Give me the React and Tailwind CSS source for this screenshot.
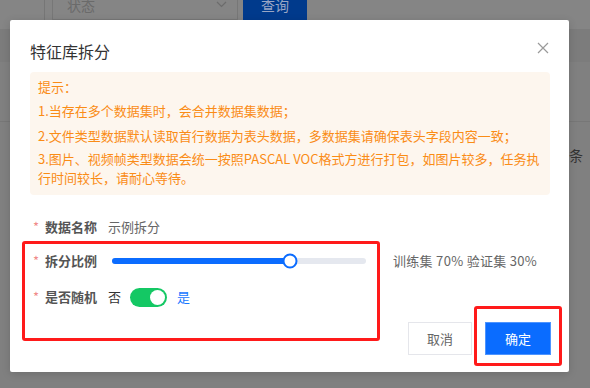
import React from 'react';

const font = { fontFamily: '"Noto Sans CJK SC", "Noto Sans", sans-serif' };

function CloseIcon() {
  return (
    <svg width="12" height="12" viewBox="0 0 12 12" fill="none">
      <path d="M1 1L11 11M11 1L1 11" stroke="#9a9a9a" strokeWidth="1.2" />
    </svg>
  );
}

function Chevron() {
  return (
    <svg width="11" height="7" viewBox="0 0 11 7" fill="none">
      <path d="M1 1L5.5 5.5L10 1" stroke="#6c6c6c" strokeWidth="1.2" />
    </svg>
  );
}

function FormLabel({ children }) {
  return (
    <div className="flex items-center pl-[23px] w-[87px] shrink-0">
      <span className="w-[12px] text-[13px] leading-[20px] text-[#f08a8a]">*</span>
      <span className="text-[13px] leading-[20px] font-semibold text-[#555]">{children}</span>
    </div>
  );
}

export default function App() {
  const ratio = 70;

  return (
    <div className="relative w-[590px] h-[388px] overflow-hidden bg-[#808080]" style={font}>
      {/* dimmed page behind the dialog */}
      <div className="flex h-[29px] bg-[#858585] overflow-hidden">
        <div className="w-[45px] h-[20px] border-r border-[#767676]" />
        <div className="ml-[7px] -mt-[11px] w-[186px] h-[31px] border border-[#777] flex items-center justify-between pl-[14px] pr-[10px]">
          <span className="text-[14px] leading-[20px] text-[#6a6a6a]">状态</span>
          <Chevron />
        </div>
        <div className="ml-[5px] -mt-[11px] w-[64px] h-[31px] bg-[#003a8c] flex items-center justify-center">
          <span className="text-[14px] leading-[20px] text-[#9aa6c4]">查询</span>
        </div>
      </div>
      <div className="h-[33px] bg-[#7c7c7c]" />
      <div className="h-[60px] border-b border-[#777]" />
      <div className="flex justify-end pr-[7px] pt-[23px]">
        <span className="text-[14px] text-[#333]">条</span>
      </div>

      {/* dialog */}
      <div className="absolute left-[10px] top-[20px] w-[559px] h-[352px] bg-white rounded-[2px] shadow-[0_2px_8px_rgba(0,0,0,0.15)]">
        <div className="flex items-center justify-between pl-[20px] pr-[20px] pt-[19px]">
          <h1 className="text-[16px] leading-[24px] text-[#333] font-normal">特征库拆分</h1>
          <button className="-mt-[6px]">
            <CloseIcon />
          </button>
        </div>

        <div className="mx-[20px] mt-[9px] w-[520px] h-[123px] rounded-[4px] bg-[#fdf6ee] pl-[8px] pr-[6px] pt-[5px] text-[13px] leading-[19px] text-[#fa8c16]">
          <p>提示：</p>
          <p className="mt-[5px]">1.当存在多个数据集时，会合并数据集数据；</p>
          <p className="mt-[6px]">2.文件类型数据默认读取首行数据为表头数据，多数据集请确保表头字段内容一致；</p>
          <p className="mt-[4px] whitespace-nowrap">
            3.图片、视频帧类型数据会统一按照PASCAL VOC格式方进行打包，如图片较多，任务执
            <br />
            行时间较长，请耐心等待。
          </p>
        </div>

        <div className="mt-[22px] flex items-center h-[20px]">
          <FormLabel>数据名称</FormLabel>
          <span className="ml-[11px] text-[13px] leading-[20px] text-[#666]">示例拆分</span>
        </div>

        <div className="mt-[14px] flex items-center h-[20px]">
          <FormLabel>拆分比例</FormLabel>
          <div className="ml-[15px] relative w-[254px] h-[6px] rounded-full bg-[#e5e8ef]">
            <div className="absolute left-0 top-0 h-[6px] rounded-full bg-[#0b6cff]" style={{ width: `${ratio}%` }} />
            <div
              className="absolute top-1/2 w-[15px] h-[15px] -translate-x-1/2 -translate-y-1/2 rounded-full bg-white border-2 border-[#0b6cff]"
              style={{ left: `${ratio}%` }}
            />
          </div>
          <span className="ml-[27px] text-[13px] leading-[20px] tracking-[0.3px] text-[#666]">训练集 70% 验证集 30%</span>
        </div>

        <div className="mt-[16px] flex items-center h-[20px]">
          <FormLabel>是否随机</FormLabel>
          <span className="ml-[11px] text-[13px] leading-[20px] text-[#333]">否</span>
          <div className="ml-[9px] w-[37px] h-[19px] rounded-full bg-[#14c864] flex items-center justify-end pr-[2px]">
            <div className="w-[15px] h-[15px] rounded-full bg-white" />
          </div>
          <span className="ml-[10px] text-[13px] leading-[20px] text-[#1677ff]">是</span>
        </div>

        <div className="mt-[15px] flex justify-end gap-[13px] pr-[18px]">
          <button className="w-[64px] h-[33px] border border-[#e5e6eb] text-[13px] text-[#666] bg-white">取消</button>
          <button className="w-[66px] h-[33px] bg-[#0a6cff] border border-[#4d94ff] text-[13px] text-white">确定</button>
        </div>

        {/* annotation boxes */}
        <div className="absolute left-[12px] top-[221px] w-[358px] h-[100px] border-[3px] border-[#ff1a1a] rounded-[3px]" />
        <div className="absolute left-[464px] top-[286px] w-[88px] h-[60px] border-[3px] border-[#ff1a1a] rounded-[3px]" />
      </div>
    </div>
  );
}
